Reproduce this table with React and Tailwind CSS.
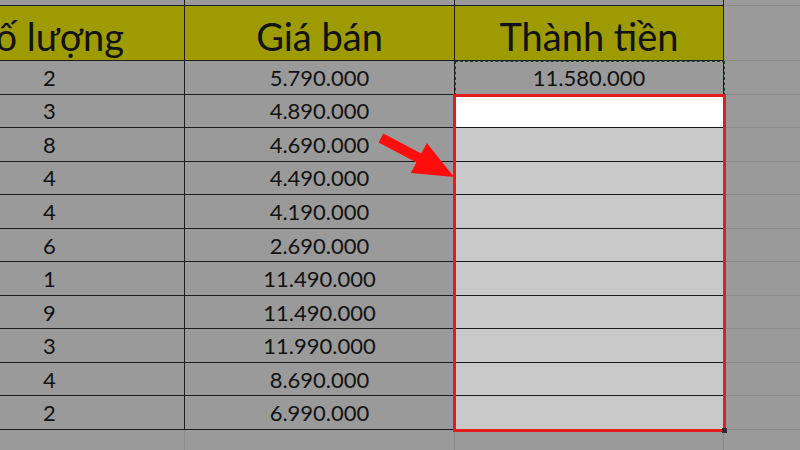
import React from 'react';

// Excel sheet dimmed behind a selection highlight
const rows = [
  ['2', '5.790.000', '11.580.000'],
  ['3', '4.890.000', ''],
  ['8', '4.690.000', ''],
  ['4', '4.490.000', ''],
  ['4', '4.190.000', ''],
  ['6', '2.690.000', ''],
  ['1', '11.490.000', ''],
  ['9', '11.490.000', ''],
  ['3', '11.990.000', ''],
  ['4', '8.690.000', ''],
  ['2', '6.990.000', ''],
];

const dark = 'border-r border-b border-[#1c1c1c]';
const light = 'border-r border-b border-[#8a8a8a]';

function Cell({ children, className = '' }) {
  return <div className={`flex items-center justify-center overflow-hidden whitespace-nowrap ${className}`}>{children}</div>;
}

export default function App() {
  return (
    <div
      className="relative w-[800px] h-[450px] overflow-hidden bg-[#9a9a9a] text-[#121212]"
      style={{ fontFamily: "Lato, 'Liberation Sans', sans-serif" }}
    >
      <div className="-ml-[85px] grid grid-cols-[270px_270px_269px_270px] grid-rows-[6px_55px_repeat(11,33.55px)_60px]">
        {/* row above header */}
        <Cell className={dark} />
        <Cell className={dark} />
        <Cell className={dark} />
        <Cell className={light} />

        {/* header */}
        <Cell className={`${dark} bg-[#9d9b00] text-[38px] pt-1.5`}>Số lượng</Cell>
        <Cell className={`${dark} bg-[#9d9b00] text-[38px] pt-1.5`}>Giá bán</Cell>
        <Cell className={`${dark} bg-[#9d9b00] text-[38px] pt-1.5`}>Thành tiền</Cell>
        <Cell className={light} />

        {rows.map((r, i) => (
          <React.Fragment key={i}>
            <Cell className={`${dark} text-[22px]`}>{r[0]}</Cell>
            <Cell className={`${dark} text-[22px]`}>{r[1]}</Cell>
            <Cell
              className={`${dark} text-[22px] ${i === 0 ? '' : i === 1 ? 'bg-white' : 'bg-[#c9c9c9]'}`}
            >
              {r[2]}
            </Cell>
            <Cell className={light} />
          </React.Fragment>
        ))}

        <Cell className={light} />
        <Cell className={light} />
        <Cell className={light} />
        <Cell className={light} />
      </div>

      {/* copy marquee */}
      <div className="absolute left-[455px] top-[61px] w-[270px] h-[35px] border border-dashed border-[#1f4a2f]" />

      {/* red highlight */}
      <div className="absolute left-[453px] top-[94px] w-[273px] h-[338px] border-[3px] border-[#e11d1d]" />
      <div className="absolute left-[722px] top-[428px] w-[5px] h-[5px] bg-[#3a2a2a]" />

      {/* arrow */}
      <svg className="absolute left-0 top-0" width="800" height="450" viewBox="0 0 800 450">
        <polygon
          fill="#ff0d0d"
          points="383.4,133.6 421.2,153.6 426.9,143 454,177 410.7,173 416.4,162.4 378.6,142.4"
        />
      </svg>
    </div>
  );
}
